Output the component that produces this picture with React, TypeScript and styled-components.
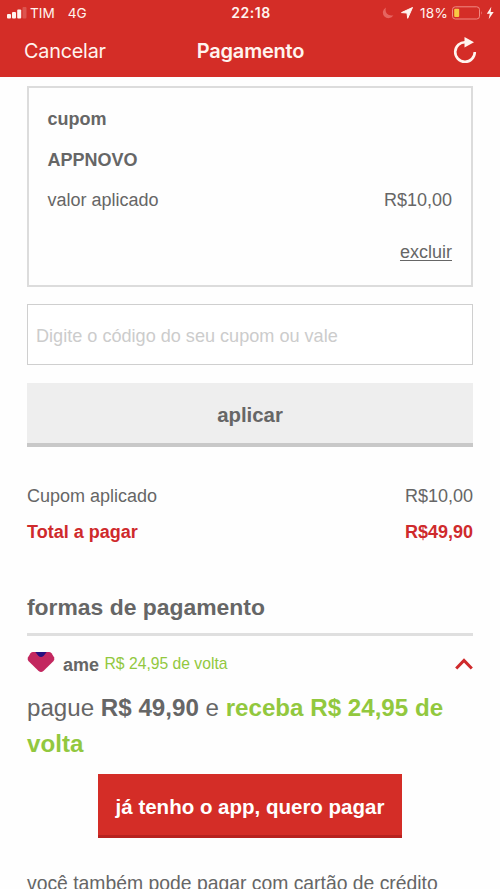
import React from "react";
import styled, { createGlobalStyle } from "styled-components";

const red = "#d42d27";
const gray = "#666";
const green = "#92c83e";

const GlobalStyle = createGlobalStyle`
  * { box-sizing: border-box; }
  body { margin: 0; background: #fefefe; overflow: hidden; }
  button, input { font: inherit; border-radius: 0; margin: 0; }
`;

const Screen = styled.div`
  width: 500px;
  height: 889px;
  overflow: hidden;
  background: #fefefe;
  color: ${gray};
  font: 18px "Liberation Sans", Arial, sans-serif;
`;

const Header = styled.header`
  height: 77px;
  background: ${red};
  color: #fff4ef;
  font-family: Inter, sans-serif;
`;

const StatusBar = styled.div`
  display: grid;
  grid-template-columns: 1fr auto 1fr;
  align-items: center;
  height: 26px;
  padding: 0 5px 0 7px;
  font-size: 13.6px;
  line-height: 26px;
`;

const Carrier = styled.div`
  display: flex;
  align-items: center;
  svg { margin-right: 3px; }
`;

const Network = styled.span`
  margin-left: 13px;
`;

const Clock = styled.span`
  font-size: 14px;
  font-weight: 600;
  letter-spacing: 0.5px;
`;

const Indicators = styled.div`
  display: flex;
  align-items: center;
  justify-content: flex-end;
`;

const Moon = styled.svg`
  margin-right: 7px;
`;

const Charge = styled.span`
  margin: 0 4px 0 7px;
  letter-spacing: 0.2px;
`;

const NavBar = styled.nav`
  display: grid;
  grid-template-columns: 1fr auto 1fr;
  align-items: center;
  height: 50px;
  padding: 0 23px 0 24px;
  svg { justify-self: end; }
`;

const Cancel = styled.span`
  font-size: 19.8px;
  letter-spacing: -0.2px;
`;

const Title = styled.h1`
  margin: 0;
  font-size: 20px;
  font-weight: 600;
  letter-spacing: -0.2px;
`;

const Content = styled.main`
  padding: 9px 27px 0;
`;

const CouponCard = styled.section`
  height: 201px;
  padding: 12px 19px 0 18.5px;
  border: 2px solid #dcdcdc;
`;

const Line = styled.div<{ $height: number; $bold?: boolean; $color?: string }>`
  display: flex;
  align-items: center;
  justify-content: space-between;
  height: ${(p) => p.$height}px;
  font-weight: ${(p) => (p.$bold ? 700 : 400)};
  color: ${(p) => p.$color || gray};
`;

const RemoveLink = styled.a`
  display: block;
  margin-top: 14px;
  line-height: 40px;
  text-align: right;
  text-decoration: underline;
  text-underline-offset: 2px;
  text-decoration-thickness: 1px;
`;

const CodeInput = styled.input`
  display: block;
  width: 100%;
  height: 61px;
  margin-top: 17px;
  padding: 3px 8px 0;
  border: 1px solid #cfcfcf;
  background: #fff;
  font-size: 18.1px;
  outline: none;
  &::placeholder { color: #ccc; opacity: 1; }
`;

const ApplyButton = styled.button`
  display: block;
  width: 100%;
  height: 64px;
  margin-top: 18px;
  padding: 5px 0 0;
  border: 0;
  border-bottom: 4px solid #c8c8c8;
  background: #eee;
  color: ${gray};
  font-size: 20.4px;
  font-weight: 700;
`;

const Summary = styled.section`
  margin-top: 31px;
`;

const SectionTitle = styled.h2`
  height: 51px;
  margin: 35px 0 0;
  border-bottom: 3px solid #dfdfdf;
  font-size: 22.9px;
  line-height: 45px;
`;

const MethodHeader = styled.div`
  display: flex;
  align-items: center;
  height: 54px;
`;

const Logo = styled.svg`
  margin: -1px 8px 0 0;
`;

const Brand = styled.strong`
  margin: 4px 5.5px 0 0;
`;

const Cashback = styled.span`
  flex: 1;
  padding-top: 1px;
  color: ${green};
  font-size: 15.7px;
`;

const Chevron = styled.svg`
  margin-top: 2px;
`;

const Offer = styled.p`
  margin: 0;
  font-size: 24.15px;
  line-height: 36px;
`;

const Highlight = styled.strong`
  color: ${green};
`;

const PayButton = styled.button`
  display: block;
  width: 304px;
  height: 64px;
  margin: 12px auto 0;
  padding: 4px 0 0;
  border: 0;
  border-bottom: 3px solid #b7221f;
  background: ${red};
  color: #fff;
  font-size: 20.5px;
  font-weight: 700;
  white-space: nowrap;
`;

const CardNote = styled.p`
  margin: 33px 0 0;
  font-size: 19.35px;
  line-height: 24px;
  white-space: nowrap;
`;

export default function App() {
  return (
    <Screen>
      <GlobalStyle />
      <Header>
        <StatusBar>
          <Carrier>
            <svg width="20" height="12" viewBox="0 0 20 12" fill="#fff4ef">
              <rect x="0" y="7" width="4" height="4.5" rx="1" />
              <rect x="5" y="5" width="4" height="6.5" rx="1" />
              <rect x="10.2" y="2.5" width="4" height="9" rx="1" />
              <rect x="15.5" y="0" width="4" height="11.5" rx="1" opacity=".2" />
            </svg>
            <span>TIM</span>
            <Network>4G</Network>
          </Carrier>
          <Clock>22:18</Clock>
          <Indicators>
            <Moon width="12" height="12" viewBox="0 0 12 12">
              <path d="M4 .5A5.6 5.6 0 1 0 11.4 8.2Q7.5 9.2 5 6.8 2.8 4.4 4 .5Z" fill="#f0827e" opacity=".65" />
            </Moon>
            <svg width="12" height="12" viewBox="0 0 12 12">
              <path d="M11.5.5 6.7 11.3 6 6 .5 5.6Z" fill="#fff4ef" stroke="#fff4ef" strokeLinejoin="round" />
            </svg>
            <Charge>18%</Charge>
            <svg width="43" height="14" viewBox="0 0 43 14">
              <rect x=".5" y=".8" width="27" height="12.2" rx="2.8" fill="none" stroke="#f08a84" />
              <rect x="2.2" y="2.7" width="5" height="8.4" rx="1" fill="#f8c843" />
              <path d="M29.3 5q1.6 1.9 0 3.8Z" fill="#f08a84" />
              <path d="m39.3.8-4.5 7h3l-1.1 5.4 5-7.3h-3.1Z" fill="#fff4ef" />
            </svg>
          </Indicators>
        </StatusBar>
        <NavBar>
          <Cancel>Cancelar</Cancel>
          <Title>Pagamento</Title>
          <svg width="25" height="28" viewBox="0 0 25 28">
            <path d="M13.5 5.2A9.8 9.8 0 1 0 22.8 15" fill="none" stroke="#fff4ef" strokeWidth="2.6" />
            <path d="M12.5.1 22 5.2 12.5 10.4Z" fill="#fff4ef" />
          </svg>
        </NavBar>
      </Header>
      <Content>
        <CouponCard>
          <Line $height={38} $bold>cupom</Line>
          <Line $height={45} $bold>APPNOVO</Line>
          <Line $height={35}>
            <span>valor aplicado</span>
            <span>R$10,00</span>
          </Line>
          <RemoveLink>excluir</RemoveLink>
        </CouponCard>
        <CodeInput placeholder="Digite o código do seu cupom ou vale" />
        <ApplyButton>aplicar</ApplyButton>
        <Summary>
          <Line $height={36}>
            <span>Cupom aplicado</span>
            <span>R$10,00</span>
          </Line>
          <Line $height={36} $bold $color="#cf2a2c">
            <span>Total a pagar</span>
            <span>R$49,90</span>
          </Line>
        </Summary>
        <SectionTitle>formas de pagamento</SectionTitle>
        <MethodHeader>
          <Logo width="28" height="21" viewBox="0 0 28 21">
            <path d="M6 0H22Q23.5 0 24.5 1.2L27 5.2Q28 7.2 26.6 8.9L16.4 19Q14 21 11.6 19L1.4 8.9Q0 7.2 1 5.2L3.5 1.2Q4.5 0 6 0Z" fill="#c3275f" />
            <path d="M8.3 0H19.7L16.7 3.7Q14 6.3 11.3 3.7Z" fill="#28107f" />
          </Logo>
          <Brand>ame</Brand>
          <Cashback>R$ 24,95 de volta</Cashback>
          <Chevron width="18" height="12" viewBox="0 0 18 12">
            <path d="m1.2 10.5 7.8-8 7.8 8" fill="none" stroke="#cf2a2c" strokeWidth="3" />
          </Chevron>
        </MethodHeader>
        <Offer>
          pague <strong>R$ 49,90</strong> e <Highlight>receba R$ 24,95 de volta</Highlight>
        </Offer>
        <PayButton>já tenho o app, quero pagar</PayButton>
        <CardNote>você também pode pagar com cartão de crédito</CardNote>
      </Content>
    </Screen>
  );
}
